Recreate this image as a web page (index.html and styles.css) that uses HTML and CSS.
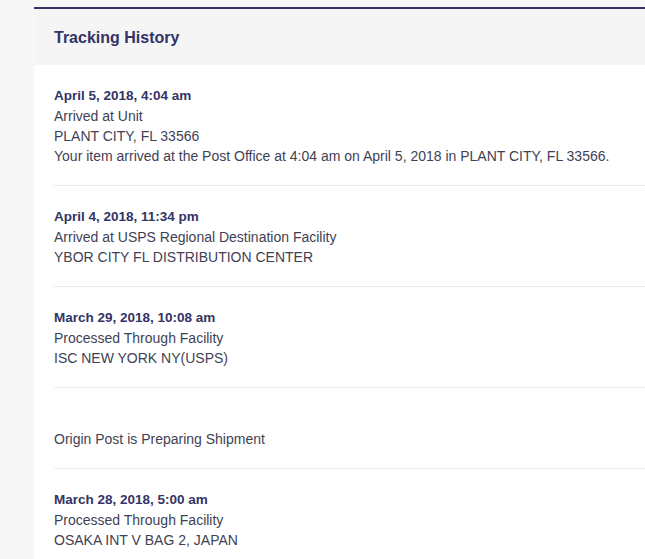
FILE: index.html
```html
<!DOCTYPE html>
<html>
<head>
<meta charset="utf-8">
<link rel="stylesheet" href="styles.css">
</head>
<body>
<div class="page">
  <section class="card">
    <header class="card-head">Tracking History</header>
    <div class="list">
      <div class="entry">
        <div class="date">April 5, 2018, 4:04 am</div>
        <div class="line">Arrived at Unit</div>
        <div class="line">PLANT CITY, FL 33566</div>
        <div class="line">Your item arrived at the Post Office at 4:04 am on April 5, 2018 in PLANT CITY, FL 33566.</div>
      </div>
      <div class="entry">
        <div class="date">April 4, 2018, 11:34 pm</div>
        <div class="line">Arrived at USPS Regional Destination Facility</div>
        <div class="line">YBOR CITY FL DISTRIBUTION CENTER</div>
      </div>
      <div class="entry">
        <div class="date">March 29, 2018, 10:08 am</div>
        <div class="line">Processed Through Facility</div>
        <div class="line">ISC NEW YORK NY(USPS)</div>
      </div>
      <div class="entry">
        <div class="date"></div>
        <div class="line">Origin Post is Preparing Shipment</div>
      </div>
      <div class="entry">
        <div class="date">March 28, 2018, 5:00 am</div>
        <div class="line">Processed Through Facility</div>
        <div class="line">OSAKA INT V BAG 2, JAPAN</div>
      </div>
    </div>
  </section>
</div>
</body>
</html>
```
FILE: styles.css
```css
html, body {
  margin: 0;
  padding: 0;
  background: #f7f7f7;
  font-family: "Liberation Sans", Arial, sans-serif;
}
.page {
  padding: 7px 0 0 34px;
}
.card {
  border-top: 2px solid #333366;
  background: #ffffff;
}
.card-head {
  background: #f5f5f5;
  height: 56px;
  padding-left: 20px;
  line-height: 57px;
  font-size: 16px;
  font-weight: bold;
  color: #333366;
}
.list {
  padding-left: 20px;
}
.entry {
  padding: 21px 0 19px;
  border-bottom: 1px solid #ececec;
}
.date {
  height: 20px;
  line-height: 20px;
  font-size: 13.5px;
  font-weight: bold;
  color: #333366;
}
.line {
  line-height: 20px;
  font-size: 14px;
  color: #3f3f55;
}
```
